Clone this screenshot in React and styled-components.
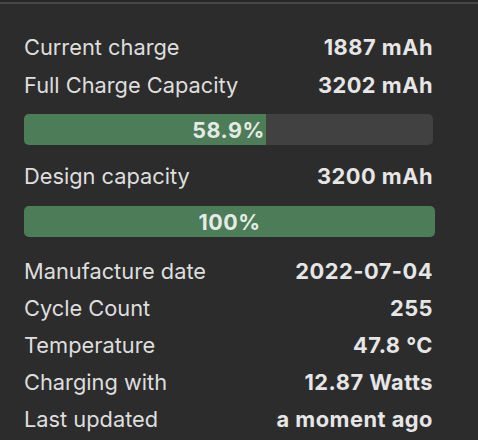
import React from "react";
import styled, { createGlobalStyle } from "styled-components";

const Global = createGlobalStyle`
  html, body { margin: 0; padding: 0; background: #2c2c2c; }
  body { font-family: Inter, "Noto Sans", "Liberation Sans", sans-serif; -webkit-font-smoothing: antialiased; }
`;

const Window = styled.div`
  width: 478px;
  height: 440px;
  box-sizing: border-box;
  background: #2c2c2c;
  border-top: 2px solid #262626;
  overflow: hidden;
`;

const TopLine = styled.div`
  height: 2px;
  background: #474747;
`;

const Panel = styled.div`
  padding: 24px 45px 0 24px;
  display: flex;
  flex-direction: column;
`;

const Row = styled.div`
  display: flex;
  justify-content: space-between;
  align-items: center;
  height: ${(p) => p.$h || 37}px;
  margin-top: ${(p) => p.$mt || 0}px;
  font-size: 21.8px;
`;

const Label = styled.span`
  color: #dedede;
  font-weight: 400;
`;

const Value = styled.span`
  color: #e6e6e6;
  font-weight: 700;
  letter-spacing: 0.5px;
`;

const Bar = styled.div`
  position: relative;
  height: 31px;
  margin-top: ${(p) => p.$mt || 0}px;
  margin-right: ${(p) => p.$mr || 0}px;
  background: #414141;
  border-radius: 5px;
  overflow: hidden;
  display: flex;
  align-items: center;
  justify-content: center;
`;

const Fill = styled.div`
  position: absolute;
  left: 0;
  top: 0;
  bottom: 0;
  background: #4d7c58;
`;

const BarText = styled.span`
  position: relative;
  color: #e4ebe5;
  font-size: 21.5px;
  font-weight: 700;
  letter-spacing: 0.5px;
`;

const ProgressBar = ({ pct, label, mt, mr }) => (
  <Bar $mt={mt} $mr={mr}>
    <Fill style={{ width: `${pct}%` }} />
    <BarText>{label}</BarText>
  </Bar>
);

export default function App() {
  return (
    <>
      <Global />
      <Window>
        <TopLine />
        <Panel>
          <Row $h={38}>
            <Label>Current charge</Label>
            <Value>1887 mAh</Value>
          </Row>
          <Row $h={38}>
            <Label>Full Charge Capacity</Label>
            <Value>3202 mAh</Value>
          </Row>
          <ProgressBar pct={59.2} label="58.9%" mt={10} />
          <Row $h={38} $mt={12}>
            <Label>Design capacity</Label>
            <Value>3200 mAh</Value>
          </Row>
          <ProgressBar pct={100} label="100%" mt={11} mr={-2} />
          <Row $mt={15}>
            <Label>Manufacture date</Label>
            <Value>2022-07-04</Value>
          </Row>
          <Row>
            <Label>Cycle Count</Label>
            <Value>255</Value>
          </Row>
          <Row>
            <Label>Temperature</Label>
            <Value>47.8 °C</Value>
          </Row>
          <Row>
            <Label>Charging with</Label>
            <Value>12.87 Watts</Value>
          </Row>
          <Row>
            <Label>Last updated</Label>
            <Value>a moment ago</Value>
          </Row>
        </Panel>
      </Window>
    </>
  );
}
